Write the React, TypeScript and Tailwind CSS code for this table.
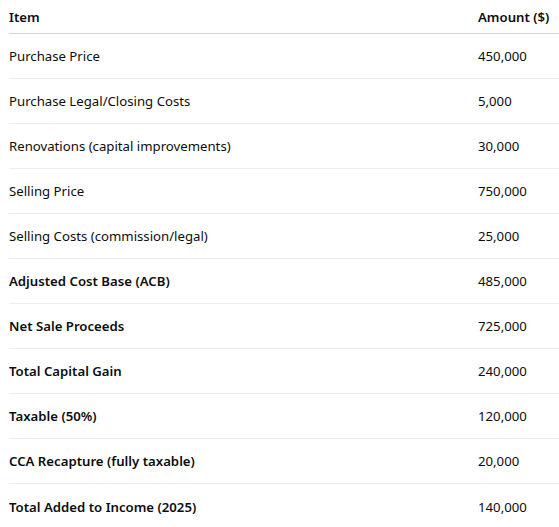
const rows: { item: string; amount: string; strong?: boolean }[] = [
  { item: 'Purchase Price', amount: '450,000' },
  { item: 'Purchase Legal/Closing Costs', amount: '5,000' },
  { item: 'Renovations (capital improvements)', amount: '30,000' },
  { item: 'Selling Price', amount: '750,000' },
  { item: 'Selling Costs (commission/legal)', amount: '25,000' },
  { item: 'Adjusted Cost Base (ACB)', amount: '485,000', strong: true },
  { item: 'Net Sale Proceeds', amount: '725,000', strong: true },
  { item: 'Total Capital Gain', amount: '240,000', strong: true },
  { item: 'Taxable (50%)', amount: '120,000', strong: true },
  { item: 'CCA Recapture (fully taxable)', amount: '20,000', strong: true },
  { item: 'Total Added to Income (2025)', amount: '140,000', strong: true },
];

export default function App() {
  return (
    <div className="w-[559px] bg-white pl-[9px] font-['Segoe_UI','Noto_Sans',sans-serif] text-[13.2px] text-[#0d0d0d]">
      <table className="w-full table-fixed border-collapse">
        <colgroup>
          <col className="w-[469px]" />
          <col className="w-[81px]" />
        </colgroup>
        <thead>
          <tr className="h-[33px] border-b border-[#d5d5d5]">
            <th className="pt-[4px] text-left font-semibold">Item</th>
            <th className="whitespace-nowrap pt-[4px] text-left font-semibold">Amount ($)</th>
          </tr>
        </thead>
        <tbody>
          {rows.map((row, i) => (
            <tr
              key={row.item}
              className={i === rows.length - 1 ? 'h-[46px]' : 'h-[45px] border-b border-[#ececec]'}
            >
              <td className={`pt-[3px] ${row.strong ? 'font-semibold' : ''}`}>{row.item}</td>
              <td className="whitespace-nowrap pt-[3px]">{row.amount}</td>
            </tr>
          ))}
        </tbody>
      </table>
    </div>
  );
}
